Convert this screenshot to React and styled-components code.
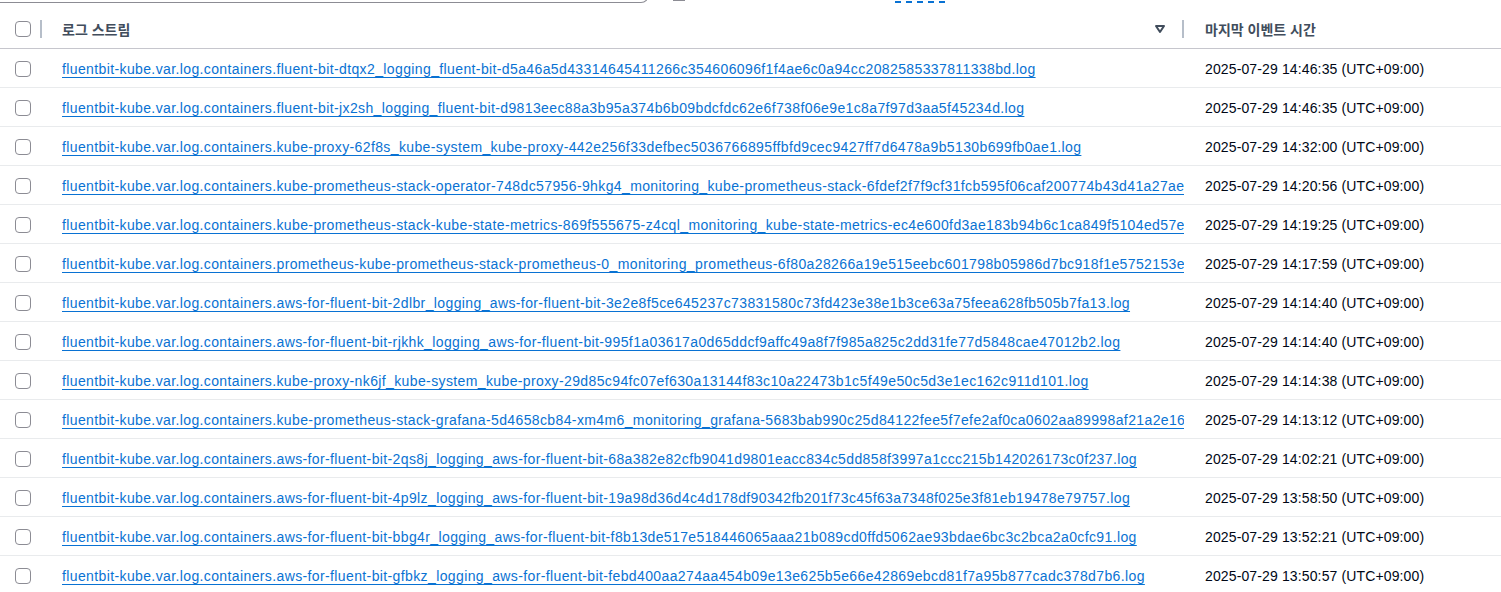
import React from "react";
import styled, { createGlobalStyle } from "styled-components";

const P = "fluentbit-kube.var.log.containers.";

const streams = [
  { name: P + "fluent-bit-dtqx2_logging_fluent-bit-d5a46a5d43314645411266c354606096f1f4ae6c0a94cc2082585337811338bd.log", time: "2025-07-29 14:46:35 (UTC+09:00)" },
  { name: P + "fluent-bit-jx2sh_logging_fluent-bit-d9813eec88a3b95a374b6b09bdcfdc62e6f738f06e9e1c8a7f97d3aa5f45234d.log", time: "2025-07-29 14:46:35 (UTC+09:00)" },
  { name: P + "kube-proxy-62f8s_kube-system_kube-proxy-442e256f33defbec5036766895ffbfd9cec9427ff7d6478a9b5130b699fb0ae1.log", time: "2025-07-29 14:32:00 (UTC+09:00)" },
  { name: P + "kube-prometheus-stack-operator-748dc57956-9hkg4_monitoring_kube-prometheus-stack-6fdef2f7f9cf31fcb595f06caf200774b43d41a27aef1c3e.log", time: "2025-07-29 14:20:56 (UTC+09:00)" },
  { name: P + "kube-prometheus-stack-kube-state-metrics-869f555675-z4cql_monitoring_kube-state-metrics-ec4e600fd3ae183b94b6c1ca849f5104ed57e58a2.log", time: "2025-07-29 14:19:25 (UTC+09:00)" },
  { name: P + "prometheus-kube-prometheus-stack-prometheus-0_monitoring_prometheus-6f80a28266a19e515eebc601798b05986d7bc918f1e5752153ec9b1d.log", time: "2025-07-29 14:17:59 (UTC+09:00)" },
  { name: P + "aws-for-fluent-bit-2dlbr_logging_aws-for-fluent-bit-3e2e8f5ce645237c73831580c73fd423e38e1b3ce63a75feea628fb505b7fa13.log", time: "2025-07-29 14:14:40 (UTC+09:00)" },
  { name: P + "aws-for-fluent-bit-rjkhk_logging_aws-for-fluent-bit-995f1a03617a0d65ddcf9affc49a8f7f985a825c2dd31fe77d5848cae47012b2.log", time: "2025-07-29 14:14:40 (UTC+09:00)" },
  { name: P + "kube-proxy-nk6jf_kube-system_kube-proxy-29d85c94fc07ef630a13144f83c10a22473b1c5f49e50c5d3e1ec162c911d101.log", time: "2025-07-29 14:14:38 (UTC+09:00)" },
  { name: P + "kube-prometheus-stack-grafana-5d4658cb84-xm4m6_monitoring_grafana-5683bab990c25d84122fee5f7efe2af0ca0602aa89998af21a2e16d7a9.log", time: "2025-07-29 14:13:12 (UTC+09:00)" },
  { name: P + "aws-for-fluent-bit-2qs8j_logging_aws-for-fluent-bit-68a382e82cfb9041d9801eacc834c5dd858f3997a1ccc215b142026173c0f237.log", time: "2025-07-29 14:02:21 (UTC+09:00)" },
  { name: P + "aws-for-fluent-bit-4p9lz_logging_aws-for-fluent-bit-19a98d36d4c4d178df90342fb201f73c45f63a7348f025e3f81eb19478e79757.log", time: "2025-07-29 13:58:50 (UTC+09:00)" },
  { name: P + "aws-for-fluent-bit-bbg4r_logging_aws-for-fluent-bit-f8b13de517e518446065aaa21b089cd0ffd5062ae93bdae6bc3c2bca2a0cfc91.log", time: "2025-07-29 13:52:21 (UTC+09:00)" },
  { name: P + "aws-for-fluent-bit-gfbkz_logging_aws-for-fluent-bit-febd400aa274aa454b09e13e625b5e66e42869ebcd81f7a95b877cadc378d7b6.log", time: "2025-07-29 13:50:57 (UTC+09:00)" },
];

const SortIcon = () => (
  <svg width="12" height="10" viewBox="0 0 12 10">
    <path d="M2 2 L10 2 L6 8 Z" fill="none" stroke="#414d5c" strokeWidth="2" strokeLinejoin="round" />
  </svg>
);

const App = () => {
  return (
    <Page>
      <Global />
      <Toolbar>
        <Search />
        <Segment />
        <Dashed />
      </Toolbar>
      <Table>
        <HeadRow>
          <BoxCell>
            <Check />
            <Divider />
          </BoxCell>
          <HeadCell>
            <HeadLabel>로그 스트림</HeadLabel>
            <SortIcon />
            <Divider />
          </HeadCell>
          <HeadCell $last>
            <HeadLabel>마지막 이벤트 시간</HeadLabel>
          </HeadCell>
        </HeadRow>
        {streams.map((s, i) => (
          <Row key={i}>
            <BoxCell>
              <Check />
            </BoxCell>
            <NameCell>
              <StreamLink href="#">{s.name}</StreamLink>
            </NameCell>
            <TimeCell>{s.time}</TimeCell>
          </Row>
        ))}
      </Table>
    </Page>
  );
};

export default App;

const Global = createGlobalStyle`
  body {
    margin: 0;
    background: #ffffff;
    font-family: "Liberation Sans", "Noto Sans CJK KR", sans-serif;
    color: #000716;
  }
`;

const Page = styled.div`
  width: 1501px;
  height: 592px;
  overflow: hidden;
`;

const Toolbar = styled.div`
  display: flex;
  align-items: flex-end;
  height: 4px;
  overflow: hidden;
`;

const Search = styled.div`
  width: 648px;
  height: 32px;
  flex: none;
  border: 1px solid #8c8c94;
  border-left: none;
  border-radius: 0 0 8px 0;
  margin-bottom: 1px;
`;

const Segment = styled.div`
  width: 12px;
  height: 10px;
  flex: none;
  margin-left: 24px;
  margin-bottom: 3px;
  border-bottom: 2px solid #8c8c94;
`;

const Dashed = styled.div`
  width: 50px;
  height: 10px;
  flex: none;
  margin-left: 210px;
  margin-bottom: 1px;
  border-bottom: 2px dashed #0972d3;
`;

const Table = styled.div`
  display: flex;
  flex-direction: column;
`;

const HeadRow = styled.div`
  display: grid;
  grid-template-columns: 46px 1138px 1fr;
  height: 44px;
  box-sizing: border-box;
  padding-top: 5px;
  border-bottom: 1px solid #c6c6cd;
  height: 45px;
`;

const Row = styled.div`
  display: grid;
  grid-template-columns: 46px 1138px 1fr;
  height: 39px;
  box-sizing: border-box;
  padding-top: 1px;
  border-bottom: 1px solid #e9ebed;
  align-items: center;
`;

const BoxCell = styled.div`
  display: flex;
  align-items: center;
  padding-left: 15px;
  gap: 9px;
`;

const Check = styled.span`
  width: 16px;
  height: 16px;
  box-sizing: border-box;
  border: 1.5px solid #8c8c94;
  border-radius: 4px;
  background: #fff;
`;

const Divider = styled.span`
  width: 2px;
  height: 18px;
  background: #b6bec9;
  flex: none;
`;

const HeadCell = styled.div`
  display: flex;
  align-items: center;
  padding-left: ${(p) => (p.$last ? "21px" : "16px")};

  svg {
    margin-left: auto;
    margin-right: 16px;
  }
`;

const HeadLabel = styled.span`
  font-size: 14px;
  font-weight: 700;
  color: #414d5c;
`;

const NameCell = styled.div`
  padding-left: 16px;
  overflow: hidden;
  white-space: nowrap;
`;

const StreamLink = styled.a`
  font-size: 14px;
  letter-spacing: 0.38px;
  color: #0972d3;
  text-decoration: underline;
  text-underline-offset: 3px;
`;

const TimeCell = styled.div`
  padding-left: 21px;
  font-size: 14px;
  letter-spacing: 0.13px;
  white-space: nowrap;
  color: #000716;
`;
